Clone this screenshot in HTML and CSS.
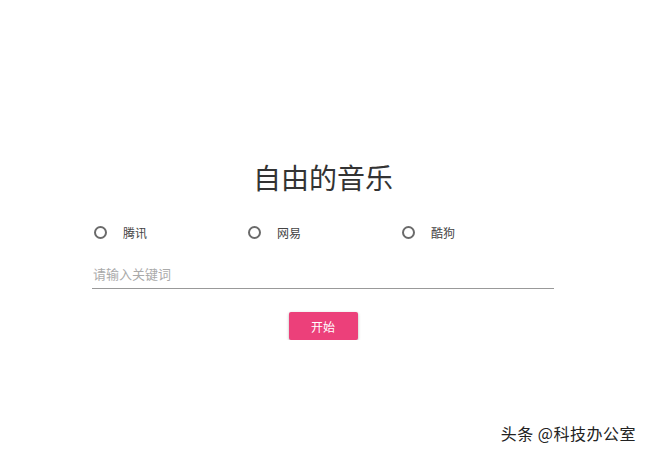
FILE: index.html
```html
<!DOCTYPE html>
<html lang="zh-CN">
<head>
	<meta charset="UTF-8">
	<title>自由的音乐</title>
	<link rel="stylesheet" href="styles.css">
</head>
<body>
	<div class="app">
		<h1 class="title">自由的音乐</h1>
		<!-- 平台选择 -->
		<div class="sources">
			<label class="source"><span class="radio"></span>腾讯</label>
			<label class="source"><span class="radio"></span>网易</label>
			<label class="source"><span class="radio"></span>酷狗</label>
		</div>
		<!-- 关键词 -->
		<div class="field">
			<input class="keyword" type="text" placeholder="请输入关键词">
		</div>
		<div class="actions">
			<button class="start">开始</button>
		</div>
	</div>
	<div class="mark">头条 @科技办公室</div>
</body>
</html>
```

FILE: styles.css
```css
body{
	margin: 0;
	font-family: "Noto Sans CJK SC", "Liberation Sans", sans-serif;
	color: #333;
	background: #fff;
}
.app{
	width: 462px;
	margin-left: 92px;
	padding-top: 155px;
}
.title{
	margin: 0;
	font-size: 28px;
	font-weight: normal;
	line-height: 44px;
	text-align: center;
	color: #333;
}
.sources{
	display: grid;
	grid-template-columns: repeat(3, 1fr);
	margin-top: 20px;
}
.source{
	display: flex;
	align-items: center;
	gap: 16px;
	padding-left: 2px;
	height: 26px;
	font-size: 12px;
	color: #444;
}
.radio{
	flex: none;
	width: 9px;
	height: 9px;
	border: 2px solid #6a6a6a;
	border-radius: 50%;
}
.field{
	margin-top: 16px;
	border-bottom: 1px solid #999;
}
.keyword{
	display: block;
	width: 100%;
	box-sizing: border-box;
	border: none;
	outline: none;
	padding: 4px 1px 5px;
	font-family: inherit;
	font-size: 13px;
	line-height: 18px;
	color: #333;
}
.keyword::placeholder{
	color: #aaa;
}
.actions{
	display: flex;
	justify-content: center;
	margin-top: 23px;
}
.start{
	width: 69px;
	height: 28px;
	border: none;
	border-radius: 2px;
	background: #ec407a;
	color: #fff;
	font-family: inherit;
	font-size: 12px;
	box-shadow: 0 1px 3px rgba(0,0,0,0.3);
}
.mark{
	position: absolute;
	right: 14px;
	top: 421px;
	font-size: 16px;
	letter-spacing: 0.5px;
	color: #222;
	text-shadow: 0 0 2px #fff;
}
```
